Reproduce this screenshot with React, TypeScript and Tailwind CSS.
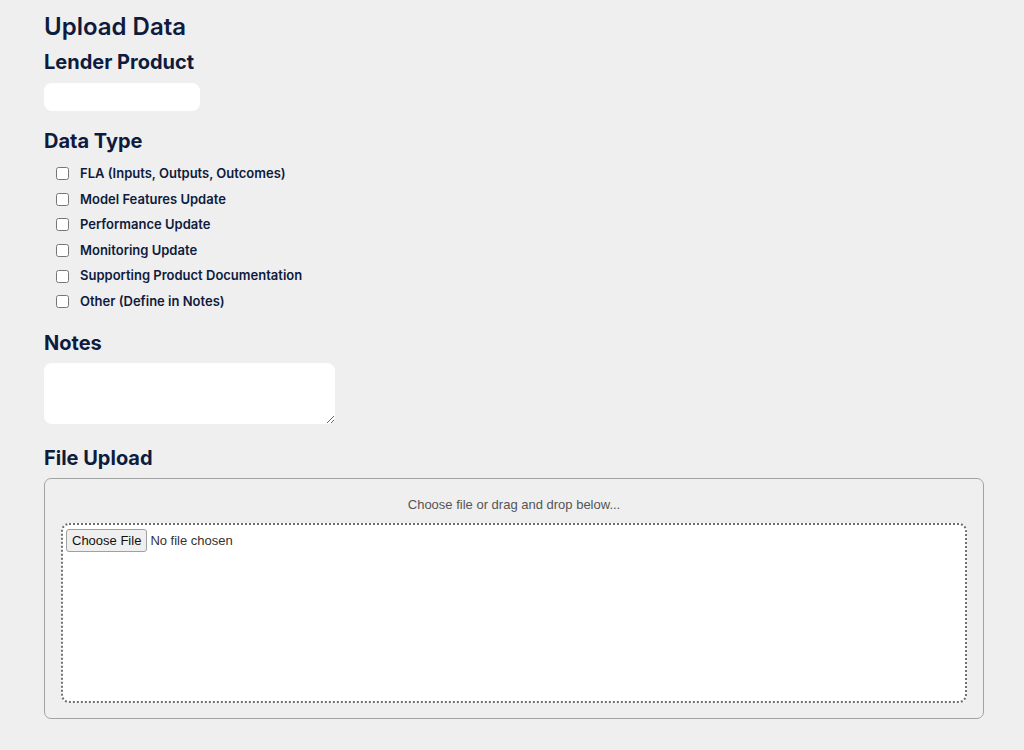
import React from "react";

const items = [
  "FLA (Inputs, Outputs, Outcomes)",
  "Model Features Update",
  "Performance Update",
  "Monitoring Update",
  "Supporting Product Documentation",
  "Other (Define in Notes)",
];

export default function App() {
  return (
    <div
      className="min-h-[750px] w-full bg-[#efefef] pl-[44px] pr-[40px] pt-[11px] pb-[20px] text-[#0e1b3d]"
      style={{ fontFamily: "Inter, 'Noto Sans', sans-serif" }}
    >
      <h1 className="text-[24px] leading-[32px] font-semibold">Upload Data</h1>
      <h2 className="mt-[5px] text-[20px] leading-[28px] font-bold">Lender Product</h2>
      <input
        type="text"
        className="mt-[7px] block h-[28px] w-[156px] rounded-[8px] bg-white outline-none"
      />
      <h2 className="mt-[16px] text-[20px] leading-[28px] font-bold">Data Type</h2>
      <div className="mt-[6px] flex flex-col">
        {items.map((t) => (
          <label key={t} className="flex h-[25.6px] items-center pl-[12px]">
            <input type="checkbox" className="m-0 h-[13px] w-[13px]" />
            <span className="ml-[11px] text-[13px] font-semibold">{t}</span>
          </label>
        ))}
      </div>
      <h2 className="mt-[14px] text-[20px] leading-[28px] font-bold">Notes</h2>
      <textarea className="mt-[6px] block h-[61px] w-[291px] rounded-[8px] bg-white outline-none" />
      <h2 className="mt-[20px] text-[20px] leading-[28px] font-bold">File Upload</h2>
      <div className="mt-[6px] flex h-[241px] w-[940px] flex-col rounded-[7px] border border-[#a3a3a3] px-[16px] pb-[15px]">
        <p
          className="pt-[18px] text-center text-[13px] leading-[16px] text-[#555]"
          style={{ fontFamily: "'Liberation Sans', Arial, sans-serif" }}
        >
          Choose file or drag and drop below...
        </p>
        <div className="mt-[10px] flex-1 rounded-[8px] border-2 border-dotted border-[#6f6f6f] bg-white px-[3px] pt-[2px]">
          <input
            type="file"
            className="text-[13px] text-[#333] file:mr-[3px] file:rounded-[3px] file:border file:border-[#a0a0a0] file:bg-[#efefef] file:px-[5px] file:py-[1px] file:text-[13px] file:text-[#111]"
            style={{ fontFamily: "'Liberation Sans', Arial, sans-serif" }}
          />
        </div>
      </div>
    </div>
  );
}
